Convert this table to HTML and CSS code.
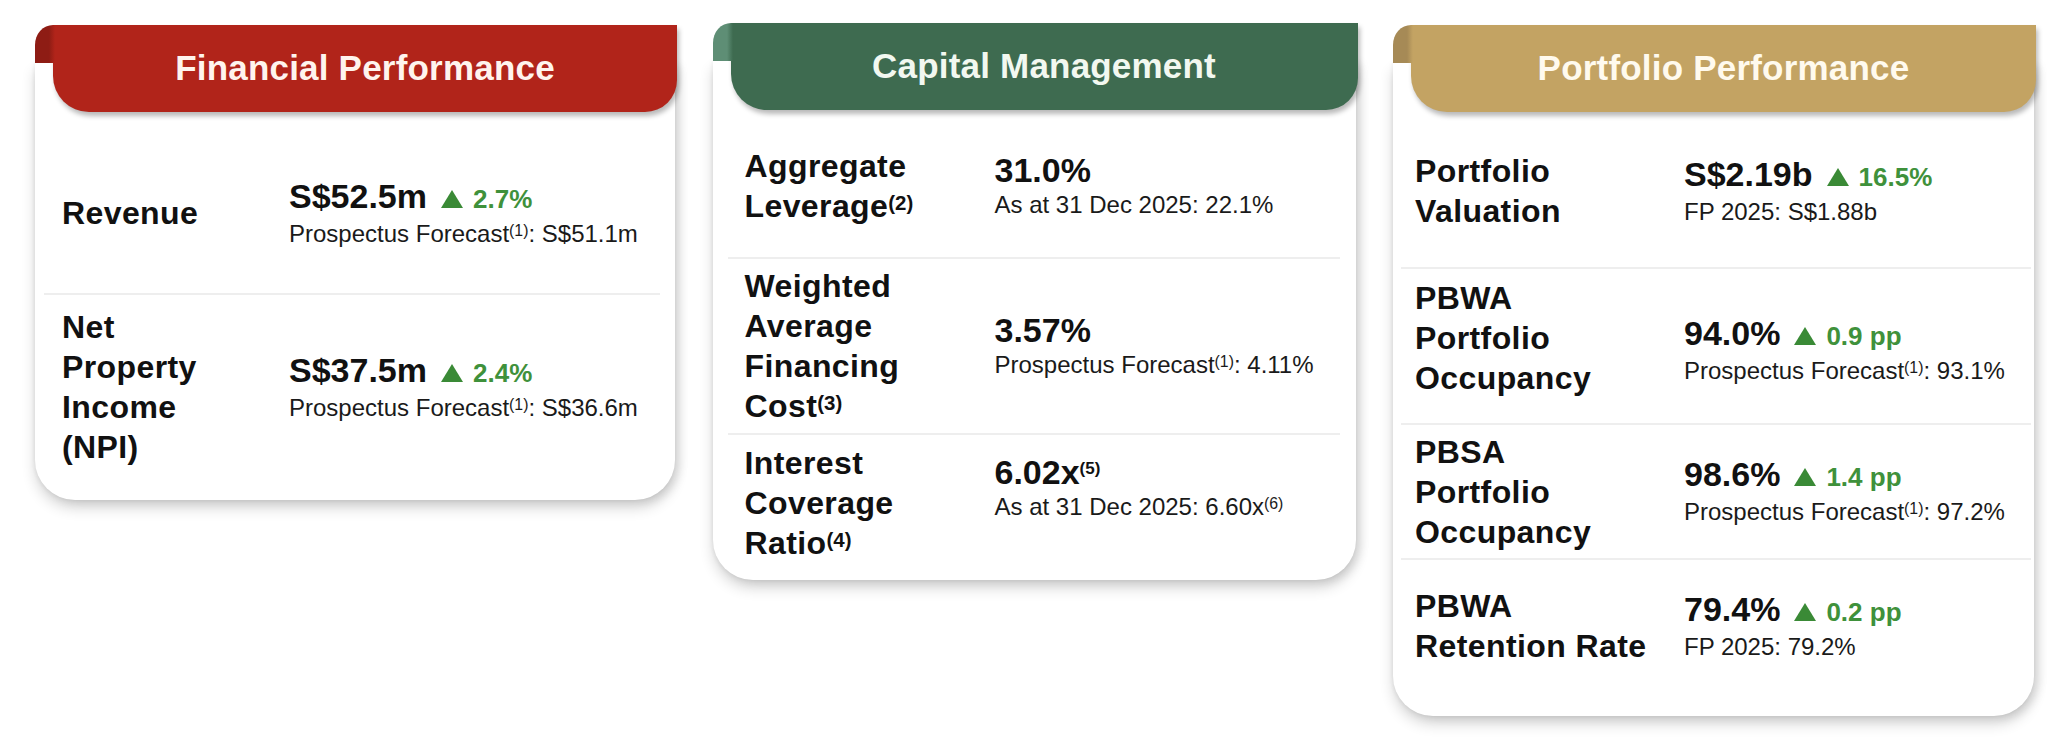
FILE: index.html
```html
<!DOCTYPE html>
<html lang="en">
<head>
<meta charset="utf-8">
<title>Key Highlights</title>
<link rel="stylesheet" href="styles.css">
</head>
<body>
<div class="board">

  <section class="card card-fin">
    <div class="card-head"><h2 class="card-title">Financial Performance</h2></div>
    <div class="card-body">
      <div class="rows">
        <div class="row">
          <div class="label">Revenue</div>
          <div class="value">
            <div class="main"><span class="num">S$52.5m</span><span class="chg"><svg class="tri" viewBox="0 0 22 18"><path d="M11 0L22 18H0Z"/></svg>2.7%</span></div>
            <div class="sub">Prospectus Forecast<sup>(1)</sup>: S$51.1m</div>
          </div>
        </div>
        <div class="row">
          <div class="label">Net<br>Property<br>Income<br>(NPI)</div>
          <div class="value">
            <div class="main"><span class="num">S$37.5m</span><span class="chg"><svg class="tri" viewBox="0 0 22 18"><path d="M11 0L22 18H0Z"/></svg>2.4%</span></div>
            <div class="sub">Prospectus Forecast<sup>(1)</sup>: S$36.6m</div>
          </div>
        </div>
      </div>
    </div>
  </section>

  <section class="card card-cap">
    <div class="card-head"><h2 class="card-title">Capital Management</h2></div>
    <div class="card-body">
      <div class="rows">
        <div class="row">
          <div class="label">Aggregate<br>Leverage<sup>(2)</sup></div>
          <div class="value">
            <div class="main"><span class="num">31.0%</span></div>
            <div class="sub">As at 31 Dec 2025: 22.1%</div>
          </div>
        </div>
        <div class="row">
          <div class="label">Weighted<br>Average<br>Financing<br>Cost<sup>(3)</sup></div>
          <div class="value">
            <div class="main"><span class="num">3.57%</span></div>
            <div class="sub">Prospectus Forecast<sup>(1)</sup>: 4.11%</div>
          </div>
        </div>
        <div class="row">
          <div class="label">Interest<br>Coverage<br>Ratio<sup>(4)</sup></div>
          <div class="value up">
            <div class="main"><span class="num">6.02x<sup>(5)</sup></span></div>
            <div class="sub">As at 31 Dec 2025: 6.60x<sup>(6)</sup></div>
          </div>
        </div>
      </div>
    </div>
  </section>

  <section class="card card-port">
    <div class="card-head"><h2 class="card-title">Portfolio Performance</h2></div>
    <div class="card-body">
      <div class="rows">
        <div class="row">
          <div class="label">Portfolio<br>Valuation</div>
          <div class="value">
            <div class="main"><span class="num">S$2.19b</span><span class="chg"><svg class="tri" viewBox="0 0 22 18"><path d="M11 0L22 18H0Z"/></svg>16.5%</span></div>
            <div class="sub">FP 2025: S$1.88b</div>
          </div>
        </div>
        <div class="row">
          <div class="label lift">PBWA<br>Portfolio<br>Occupancy</div>
          <div class="value down">
            <div class="main"><span class="num">94.0%</span><span class="chg"><svg class="tri" viewBox="0 0 22 18"><path d="M11 0L22 18H0Z"/></svg>0.9 pp</span></div>
            <div class="sub">Prospectus Forecast<sup>(1)</sup>: 93.1%</div>
          </div>
        </div>
        <div class="row">
          <div class="label">PBSA<br>Portfolio<br>Occupancy</div>
          <div class="value">
            <div class="main"><span class="num">98.6%</span><span class="chg"><svg class="tri" viewBox="0 0 22 18"><path d="M11 0L22 18H0Z"/></svg>1.4 pp</span></div>
            <div class="sub">Prospectus Forecast<sup>(1)</sup>: 97.2%</div>
          </div>
        </div>
        <div class="row">
          <div class="label">PBWA<br>Retention Rate</div>
          <div class="value">
            <div class="main"><span class="num">79.4%</span><span class="chg"><svg class="tri" viewBox="0 0 22 18"><path d="M11 0L22 18H0Z"/></svg>0.2 pp</span></div>
            <div class="sub">FP 2025: 79.2%</div>
          </div>
        </div>
      </div>
    </div>
  </section>

</div>
</body>
</html>
```

FILE: styles.css
```css
html, body {
  margin: 0;
  background: #ffffff;
}

body {
  font-family: "Liberation Sans", Arial, Helvetica, sans-serif;
  color: #111111;
  width: 2048px;
  height: 745px;
  overflow: hidden;
}

.board {
  display: grid;
  grid-template-columns: 640px 643px 641px;
  column-gap: 37.5px;
  align-items: start;
  padding: 25px 0 0 35px;
}

/* ---------- card shell ---------- */
.card {
  display: flex;
  flex-direction: column;
}

.card-head {
  position: relative;
  z-index: 1;
  height: 87px;
  margin: 0 -2px 0 18px;
  border-radius: 0 0 32px 36px;
  display: flex;
  align-items: center;
  justify-content: center;
  background: var(--head);
  box-shadow: 2px 4px 5px rgba(0, 0, 0, 0.28);
}

.card-head::before {
  content: "";
  position: absolute;
  left: -18px;
  top: 0;
  width: 20px;
  height: 38px;
  border-top-left-radius: 18px 20px;
  background: linear-gradient(90deg, var(--tab) 0%, var(--tab) 70%, var(--head) 100%);
}

.card-title {
  margin: 0 0 2px;
  font-size: 35px;
  line-height: 35px;
  font-weight: 700;
  letter-spacing: 0.2px;
  color: var(--title);
  white-space: nowrap;
}

.card-body {
  background: #ffffff;
  margin-top: -49px;
  border-radius: 0 0 40px 40px;
  box-shadow: 0 8px 14px rgba(0, 0, 0, 0.16), 5px 2px 10px rgba(0, 0, 0, 0.10), -1px 0 4px rgba(0, 0, 0, 0.05);
}

.rows {
  display: grid;
}

.row {
  display: grid;
  grid-template-columns: var(--lab) 1fr;
  align-items: center;
  padding-left: var(--pad);
}

.row + .row {
  border-top: 2px solid #eeeeee;
}

/* ---------- text ---------- */
.label {
  font-size: 32px;
  line-height: 40px;
  font-weight: 700;
  letter-spacing: 0.4px;
  color: #111111;
  white-space: nowrap;
}

.label.lift {
  margin-bottom: 16px;
}

.label sup {
  font-size: 0.64em;
  line-height: 0;
  vertical-align: 0.36em;
  letter-spacing: 0;
}

.value {
  white-space: nowrap;
}

.value.up {
  margin-bottom: 30px;
}

.value.down {
  margin-top: 8px;
}

.main {
  font-size: 34px;
  line-height: 38px;
  font-weight: 700;
  color: #111111;
}

.num sup {
  font-size: 0.5em;
  font-weight: 700;
  line-height: 0;
  vertical-align: 0.56em;
}

.chg {
  margin-left: 14px;
  font-size: 26px;
  font-weight: 700;
  color: #3f913b;
}

.tri {
  display: inline-block;
  width: 22px;
  height: 18px;
  margin-right: 10px;
  fill: #3a8a36;
}

.sub {
  font-size: 24px;
  line-height: 32px;
  color: #1a1a1a;
}

.sub sup {
  font-size: 0.66em;
  line-height: 0;
  vertical-align: 0.4em;
}

/* ---------- per-card themes ---------- */
.card-fin {
  --head: #b1241a;
  --tab: #8e1c14;
  --title: #fff4ee;
}

.card-fin .card-body {
  padding: 70px 0 21px;
}

.card-fin .rows {
  margin: 0 15px 0 9px;
  grid-template-rows: 160px 186px;
  --pad: 18px;
  --lab: 227px;
}

.card-cap {
  --head: #3e6b50;
  --tab: #5e8e75;
  --title: #f2f8f0;
}

.card-cap .card-head {
  margin-top: -2px;
}

.card-cap .card-body {
  padding: 54px 0 9px;
}

.card-cap .rows {
  margin: 0 16px 0 15px;
  grid-template-rows: 142px 176px 138px;
  --pad: 17px;
  --lab: 250px;
}

.card-port {
  --head: #c3a363;
  --tab: #a68a56;
  --title: #fffaee;
}

.card-port .card-body {
  padding: 52px 0 24px;
}

.card-port .rows {
  margin: 0 3px 0 8px;
  grid-template-rows: 152px 156px 135px 134px;
  --pad: 14px;
  --lab: 269px;
}
```
